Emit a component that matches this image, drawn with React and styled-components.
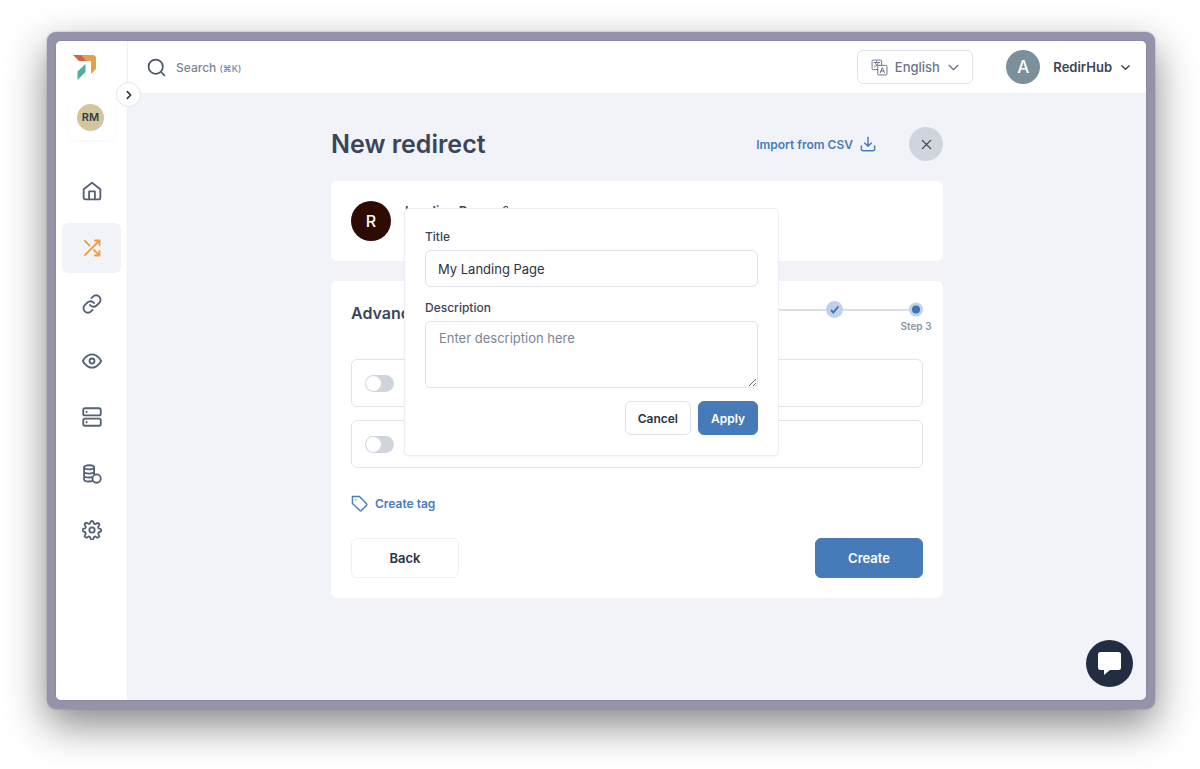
import React, { useState } from "react";
import styled, { createGlobalStyle } from "styled-components";

const GlobalStyle = createGlobalStyle`
  * {
    box-sizing: border-box;
  }
  body {
    margin: 0;
    background: #fff;
    color: #3b4557;
    font-family: Inter, "Liberation Sans", sans-serif;
    font-size: 13px;
  }
  button,
  input,
  textarea {
    font-family: inherit;
  }
  svg {
    display: block;
    flex-shrink: 0;
  }
`;

const Backdrop = styled.div`
  min-height: 100vh;
  padding: 32px 45px 60px 47px;
  display: flex;
`;

const Frame = styled.div`
  flex: 1;
  display: flex;
  background: #9493aa;
  padding: 9px;
  border-radius: 9px;
  box-shadow: 0 16px 40px rgba(0, 0, 0, 0.48), 0 0 2px rgba(0, 0, 0, 0.3);
`;

const Window = styled.div`
  position: relative;
  flex: 1;
  display: flex;
  border-radius: 5px;
  background: #f2f3f8;
  box-shadow: 0 0 2px #77778c;
`;

const Sidebar = styled.aside`
  width: 72px;
  flex-shrink: 0;
  display: flex;
  flex-direction: column;
  align-items: center;
  background: #fff;
  border-right: 1px solid #eef0f4;
  border-radius: 5px 0 0 5px;
  padding-top: 14px;
`;

const LogoLink = styled.a`
  align-self: flex-start;
  margin-left: 17px;
`;

const Workspace = styled.button`
  width: 46px;
  height: 46px;
  margin: 13px 0 26px;
  padding: 0 2px 0 0;
  display: flex;
  align-items: center;
  justify-content: center;
  background: #fff;
  border: 0;
  border-radius: 6px;
  box-shadow: 0 1px 2px rgba(30, 40, 60, 0.05);
`;

const Avatar = styled.span`
  width: ${(p) => p.$size}px;
  height: ${(p) => p.$size}px;
  display: flex;
  align-items: center;
  justify-content: center;
  flex-shrink: 0;
  border-radius: 50%;
  background: ${(p) => p.$bg};
  color: ${(p) => p.$color || "#fff"};
  font-size: ${(p) => p.$font}px;
  font-weight: ${(p) => p.$weight || 500};
`;

const Nav = styled.nav`
  width: 59px;
  height: 389px;
  display: flex;
  flex-direction: column;
  justify-content: space-between;
`;

const NavItem = styled.a`
  height: 50px;
  display: flex;
  align-items: center;
  justify-content: center;
  border-radius: 6px;
  color: ${(p) => (p.$active ? "#ef9c3c" : "#566176")};
  background: ${(p) => (p.$active ? "#f2f3f8" : "transparent")};
`;

const ExpandButton = styled.button`
  position: absolute;
  left: 60px;
  top: 41px;
  width: 25px;
  height: 25px;
  padding: 0;
  display: flex;
  align-items: center;
  justify-content: center;
  border: 1px solid #e3e5ea;
  border-radius: 50%;
  background: #fff;
  color: #2b3445;
`;

const Content = styled.div`
  flex: 1;
  display: flex;
  flex-direction: column;
`;

const TopBar = styled.header`
  height: 53px;
  padding: 0 15px 0 19px;
  display: flex;
  align-items: center;
  background: #fff;
  border-bottom: 1px solid #eceef2;
  border-radius: 0 5px 0 0;
`;

const SearchButton = styled.button`
  display: flex;
  align-items: center;
  gap: 10px;
  margin-right: auto;
  padding: 0;
  border: 0;
  background: none;
  color: #7c8497;
  font-size: 12px;
  font-weight: 500;

  svg {
    color: #4c5669;
  }
  small {
    font-size: 9px;
  }
`;

const LanguageButton = styled.button`
  width: 116px;
  height: 34px;
  margin-right: 33px;
  padding: 0;
  display: flex;
  align-items: center;
  justify-content: center;
  gap: 7px;
  border: 1px solid #e0e2ea;
  border-radius: 6px;
  background: #fff;
  color: #6b7488;
  font-size: 13px;
  font-weight: 500;
`;

const AccountButton = styled.button`
  display: flex;
  align-items: center;
  padding: 0;
  border: 0;
  background: none;
  color: #3b4557;
  font-size: 13px;
  font-weight: 600;
  line-height: 16px;
`;

const AccountName = styled.span`
  margin: 0 8px 0 13px;
`;

const Main = styled.main`
  width: 100%;
  max-width: 612px;
  margin: 0 auto;
  padding: 33px 0;
`;

const PageHead = styled.div`
  height: 34px;
  margin-bottom: 20px;
  display: flex;
  align-items: center;
`;

const PageTitle = styled.h1`
  flex: 1;
  margin: 0;
  font-size: 25px;
  font-weight: 600;
`;

const TextLink = styled.a`
  display: inline-flex;
  align-items: center;
  gap: 7px;
  color: #477cbd;
  font-size: 12px;
  font-weight: 600;
  text-decoration: none;
`;

const CloseButton = styled.button`
  width: 34px;
  height: 34px;
  margin-left: 33px;
  padding: 0;
  display: flex;
  align-items: center;
  justify-content: center;
  border: 0;
  border-radius: 50%;
  background: #d0d5dd;
  color: #3b4557;
`;

const Card = styled.section`
  margin-bottom: 20px;
  padding: 20px;
  border-radius: 6px;
  background: #fff;
`;

const LinkSummary = styled.div`
  position: relative;
  display: flex;
  gap: 14px;
`;

const SummaryTitle = styled.div`
  display: flex;
  gap: 6px;
  height: 20px;
  align-items: center;
  font-size: 13px;
  font-weight: 600;
`;

const Popover = styled.form`
  position: absolute;
  z-index: 2;
  left: 53px;
  top: 7px;
  width: 375px;
  padding: 20px;
  display: flex;
  flex-direction: column;
  background: #fff;
  border: 1px solid #eeeff3;
  border-radius: 5px;
  box-shadow: 0 1px 2px rgba(30, 40, 60, 0.05);
`;

const Label = styled.label`
  margin-bottom: 5px;
  font-size: 12px;
  font-weight: 500;
  line-height: 16px;
`;

const TextInput = styled.input`
  height: 37px;
  margin-bottom: 13px;
  padding: 0 12px;
  border: 1px solid #dfe2e9;
  border-radius: 6px;
  color: #2b3445;
  font-size: 13px;
  outline: 0;
`;

const TextArea = styled.textarea`
  height: 67px;
  margin-bottom: 13px;
  padding: 8px 13px;
  border: 1px solid #dfe2e9;
  border-radius: 5px;
  color: #2b3445;
  font-size: 13px;
  line-height: 16px;
  outline: 0;

  &::placeholder {
    color: #7c8497;
  }
`;

const PopoverActions = styled.div`
  display: flex;
  justify-content: flex-end;
  gap: 7px;
`;

const Button = styled.button`
  height: ${(p) => (p.$large ? 40 : 34)}px;
  min-width: ${(p) => (p.$large ? 108 : 60)}px;
  padding: 0 12px;
  border: 1px solid
    ${(p) => (p.$primary ? "#477ab9" : p.$large ? "#eff0f3" : "#dfe2e9")};
  border-radius: 6px;
  background: ${(p) => (p.$primary ? "#477ab9" : "#fff")};
  color: ${(p) => (p.$primary ? "#fff" : "#2b3445")};
  font-size: ${(p) => (p.$large ? 13 : 12)}px;
  font-weight: 600;
`;

const CardHead = styled.div`
  height: 58px;
  display: flex;
  justify-content: space-between;
`;

const CardTitle = styled.h2`
  margin: 0;
  font-size: 16px;
  font-weight: 600;
  line-height: 24px;
`;

const Steps = styled.ol`
  display: flex;
  margin: 0;
  padding: 0;
  list-style: none;
`;

const Step = styled.li`
  display: flex;
  flex-direction: column;
  align-items: center;
  width: ${(p) => (p.$current ? 14 : 17)}px;
  color: #8b93a3;
  font-size: 10px;
  font-weight: 600;
  line-height: 16px;
  white-space: nowrap;

  svg {
    height: 17px;
  }
`;

const StepLine = styled.li`
  width: 66px;
  height: 2px;
  margin-top: 8px;
  background: #dadee6;
`;

const OptionRow = styled.label`
  height: 48px;
  margin-bottom: 13px;
  padding: 0 13px;
  display: flex;
  align-items: center;
  gap: 14px;
  border: 1px solid #dfe2e9;
  border-radius: 6px;
`;

const Switch = styled.input`
  appearance: none;
  width: 29px;
  height: 17px;
  margin: 0;
  padding: 1px;
  border-radius: 9px;
  background: ${(p) => (p.checked ? "#477ab9" : "#d0d5dd")};

  &::before {
    content: "";
    display: block;
    width: 15px;
    height: 15px;
    margin-left: ${(p) => (p.checked ? 12 : 0)}px;
    border-radius: 50%;
    background: #fff;
  }
`;

const TagRow = styled.div`
  height: 30px;
  margin: 20px 0;
  display: flex;
  align-items: center;
`;

const CardActions = styled.div`
  display: flex;
  justify-content: space-between;
`;

const ChatButton = styled.button`
  position: absolute;
  right: 13px;
  bottom: 13px;
  width: 47px;
  height: 47px;
  padding: 0;
  display: flex;
  align-items: center;
  justify-content: center;
  border: 0;
  border-radius: 50%;
  background: #222d42;
`;

function Icon({ size = 20, width = 2, view = 24, children }) {
  return (
    <svg
      width={size}
      height={size}
      viewBox={`0 0 ${view} ${view}`}
      fill="none"
      stroke="currentColor"
      strokeWidth={width}
      strokeLinecap="round"
      strokeLinejoin="round"
      aria-hidden="true"
    >
      {children}
    </svg>
  );
}

const Logo = () => (
  <svg width="24" height="26" viewBox="0 0 24 26" aria-hidden="true">
    <path d="M0 0h12l3 6H6z" fill="#d4614a" />
    <path d="M8 0h12q3 0 3 3v11l-5 5V6h-5z" fill="#e2a04c" />
    <path d="M12.500 9v8L4.500 25v-8.500z" fill="#4fae9f" />
  </svg>
);

const navItems = [
  {
    name: "Home",
    icon: (
      <>
        <path d="M2 10 12 2l10 8v10a2 2 0 0 1-2 2H4a2 2 0 0 1-2-2z" />
        <path d="M8.500 22V12.500h7V22" />
      </>
    ),
  },
  {
    name: "Redirects",
    active: true,
    icon: (
      <>
        <path d="M15.500 3H21v5.500M3.500 20.500 21 3M21 15.500V21h-5.500M14.500 14.500 21 21M3.500 3.500l5.500 5.500" />
      </>
    ),
  },
  {
    name: "Links",
    icon: (
      <>
        <path d="M9.500 13.200a5.300 5.300 0 0 0 8 .600l3.200-3.200a5.300 5.300 0 0 0-7.500-7.500l-1.900 1.800" />
        <path d="M14.500 10.800a5.300 5.300 0 0 0-8-.600l-3.200 3.200a5.300 5.300 0 0 0 7.500 7.500l1.800-1.800" />
      </>
    ),
  },
  {
    name: "Monitoring",
    icon: (
      <>
        <path d="M1 12s4-8 11-8 11 8 11 8-4 8-11 8S1 12 1 12z" />
        <circle cx="12" cy="12" r="3" />
      </>
    ),
  },
  {
    name: "Hosts",
    icon: (
      <>
        <rect x="1.500" y="1.500" width="21" height="8.500" rx="2" />
        <rect x="1.500" y="14" width="21" height="8.500" rx="2" />
        <path d="M5.500 5.500v.500M5.500 18v.500" />
      </>
    ),
  },
  {
    name: "Billing",
    icon: (
      <>
        <ellipse cx="8.500" cy="4" rx="6" ry="2.500" />
        <path d="M2.500 4v14.500c0 1.500 2.500 2.500 6 2.500l3-.300M14.500 4v8M2.500 9c0 1.500 2.500 2.500 6 2.500s6-1 6-2.500M2.500 13.700c0 1.500 2.500 2.500 6 2.500 1.200 0 2.300-.100 3.200-.400" />
        <circle cx="17.500" cy="17.500" r="5" />
      </>
    ),
  },
  {
    name: "Settings",
    icon: (
      <>
        <path d="M10 3.600Q10.300 1.200 12 1.200t2 2.400q.300 1.100 1.300 1.300 1 .200 1.700-.400 2-1.500 3.200-.300t-.300 3.200q-.600.700-.400 1.700t1.300 1.300q2.400.300 2.400 2t-2.400 2q-1.100.300-1.300 1.300t.400 1.700q1.500 2 .300 3.200t-3.200-.300q-.700-.600-1.700-.400t-1.300 1.300q-.300 2.400-2 2.400t-2-2.400q-.300-1.100-1.300-1.300t-1.700.400q-2 1.500-3.200.300t.300-3.200q.600-.700.400-1.700t-1.300-1.300Q.800 13.700.800 12t2.400-2q1.100-.300 1.300-1.300T4.100 7Q2.600 5 3.800 3.800T7 4.100q.700.600 1.700.400T10 3.600z" />
        <circle cx="12" cy="12" r="3.200" />
      </>
    ),
  },
];

function SideNav() {
  return (
    <Sidebar>
      <LogoLink href="#dashboard" aria-label="RedirHub">
        <Logo />
      </LogoLink>
      <Workspace type="button">
        <Avatar $size={27} $bg="#d3c69e" $color="#2f3a4a" $font={11} $weight={600}>
          RM
        </Avatar>
      </Workspace>
      <Nav>
        {navItems.map((item) => (
          <NavItem
            key={item.name}
            href={`#${item.name.toLowerCase()}`}
            aria-label={item.name}
            $active={item.active}
          >
            <Icon width={2.2}>{item.icon}</Icon>
          </NavItem>
        ))}
      </Nav>
    </Sidebar>
  );
}

function Header() {
  return (
    <TopBar>
      <SearchButton type="button">
        <Icon size={19} width={2.2}>
          <circle cx="11" cy="11" r="9" />
          <path d="m18 18 4 4" />
        </Icon>
        <span>
          Search <small>(⌘K)</small>
        </span>
      </SearchButton>
      <LanguageButton type="button">
        <Icon size={17} width={1.4}>
          <path d="M9.500 15H3a1.500 1.500 0 0 1-1.500-1.500V3A1.500 1.500 0 0 1 3 1.500h10.500A1.500 1.500 0 0 1 15 3v6" />
          <rect x="9.500" y="9" width="13" height="13.500" rx="1.500" />
          <path d="M4.500 5h7.500M8.200 3.500V5M10.500 5c-.800 3-3 5-5.500 6M6 5c.500 2 1.500 3.500 3 4.500M13 19.500l3-7.500 3 7.500M14 17h4" />
        </Icon>
        English
        <Icon size={13} width={2.4}>
          <path d="m4 8 8 8 8-8" />
        </Icon>
      </LanguageButton>
      <AccountButton type="button">
        <Avatar $size={34} $bg="#7b909b" $font={17}>
          A
        </Avatar>
        <AccountName>RedirHub</AccountName>
        <Icon size={11} width={3}>
          <path d="m4 8 8 8 8-8" />
        </Icon>
      </AccountButton>
    </TopBar>
  );
}

function DetailsPopover() {
  const [title, setTitle] = useState("My Landing Page");
  const [description, setDescription] = useState("");

  return (
    <Popover onSubmit={(e) => e.preventDefault()}>
      <Label htmlFor="title">Title</Label>
      <TextInput id="title" value={title} onChange={(e) => setTitle(e.target.value)} />
      <Label htmlFor="description">Description</Label>
      <TextArea
        id="description"
        placeholder="Enter description here"
        value={description}
        onChange={(e) => setDescription(e.target.value)}
      />
      <PopoverActions>
        <Button type="button">Cancel</Button>
        <Button type="submit" $primary>
          Apply
        </Button>
      </PopoverActions>
    </Popover>
  );
}

function Option({ name }) {
  const [on, setOn] = useState(false);

  return (
    <OptionRow>
      <Switch type="checkbox" aria-label={name} checked={on} onChange={() => setOn(!on)} />
    </OptionRow>
  );
}

export default function App() {
  return (
    <Backdrop>
      <GlobalStyle />
      <Frame>
        <Window>
          <SideNav />
          <ExpandButton type="button" aria-label="Expand sidebar">
            <Icon size={10} width={4}>
              <path d="m8 4 8 8-8 8" />
            </Icon>
          </ExpandButton>
          <Content>
            <Header />
            <Main>
              <PageHead>
                <PageTitle>New redirect</PageTitle>
                <TextLink href="#import">
                  Import from CSV
                  <Icon size={16} width={2.2}>
                    <path d="M12 2v13M7 10.500l5 5 5-5M2 15v4a3 3 0 0 0 3 3h14a3 3 0 0 0 3-3v-4" />
                  </Icon>
                </TextLink>
                <CloseButton type="button" aria-label="Close">
                  <Icon size={11} width={3}>
                    <path d="m3 3 18 18M21 3 3 21" />
                  </Icon>
                </CloseButton>
              </PageHead>

              <Card>
                <LinkSummary>
                  <Avatar $size={40} $bg="#2f0c03" $font={16}>
                    R
                  </Avatar>
                  <SummaryTitle>
                    Landing Page
                    <Icon size={13}>
                      <path d="M3 21l1-5L16 3.500a3 3 0 0 1 4.500 4.500L8 20z" />
                    </Icon>
                  </SummaryTitle>
                  <DetailsPopover />
                </LinkSummary>
              </Card>

              <Card>
                <CardHead>
                  <CardTitle>Advanced</CardTitle>
                  <Steps>
                    <StepLine aria-hidden="true" />
                    <Step>
                      <svg width="17" height="17" viewBox="0 0 17 17" aria-hidden="true">
                        <circle cx="8.500" cy="8.500" r="8.500" fill="#bfd1e8" />
                        <path d="m5 9 2.300 2.500L12.300 5.500" fill="none" stroke="#3f72b3" strokeWidth="1.900" />
                      </svg>
                    </Step>
                    <StepLine aria-hidden="true" />
                    <Step $current>
                      <svg width="14" height="14" viewBox="0 0 14 14" aria-hidden="true">
                        <circle cx="7" cy="7" r="7" fill="#bfd1e8" />
                        <circle cx="7" cy="7" r="4" fill="#3f72b3" />
                      </svg>
                      Step 3
                    </Step>
                  </Steps>
                </CardHead>
                <Option name="First option" />
                <Option name="Second option" />
                <TagRow>
                  <TextLink href="#tag">
                    <Icon size={17}>
                      <path d="M2 2h10l10 10.500a1.500 1.500 0 0 1 0 2L14.500 22a1.500 1.500 0 0 1-2 0L2 12z" />
                      <path d="M7 7v.100" />
                    </Icon>
                    Create tag
                  </TextLink>
                </TagRow>
                <CardActions>
                  <Button type="button" $large>
                    Back
                  </Button>
                  <Button type="button" $large $primary>
                    Create
                  </Button>
                </CardActions>
              </Card>
            </Main>
          </Content>
          <ChatButton type="button" aria-label="Open chat">
            <svg width="23" height="23" viewBox="0 0 23 23" aria-hidden="true">
              <path d="M2.500 0h18Q23 0 23 2.500v13q0 2.500-2.500 2.500H12l-6 5v-5H2.500Q0 18 0 15.500v-13Q0 0 2.500 0z" fill="#fff" />
            </svg>
          </ChatButton>
        </Window>
      </Frame>
    </Backdrop>
  );
}
